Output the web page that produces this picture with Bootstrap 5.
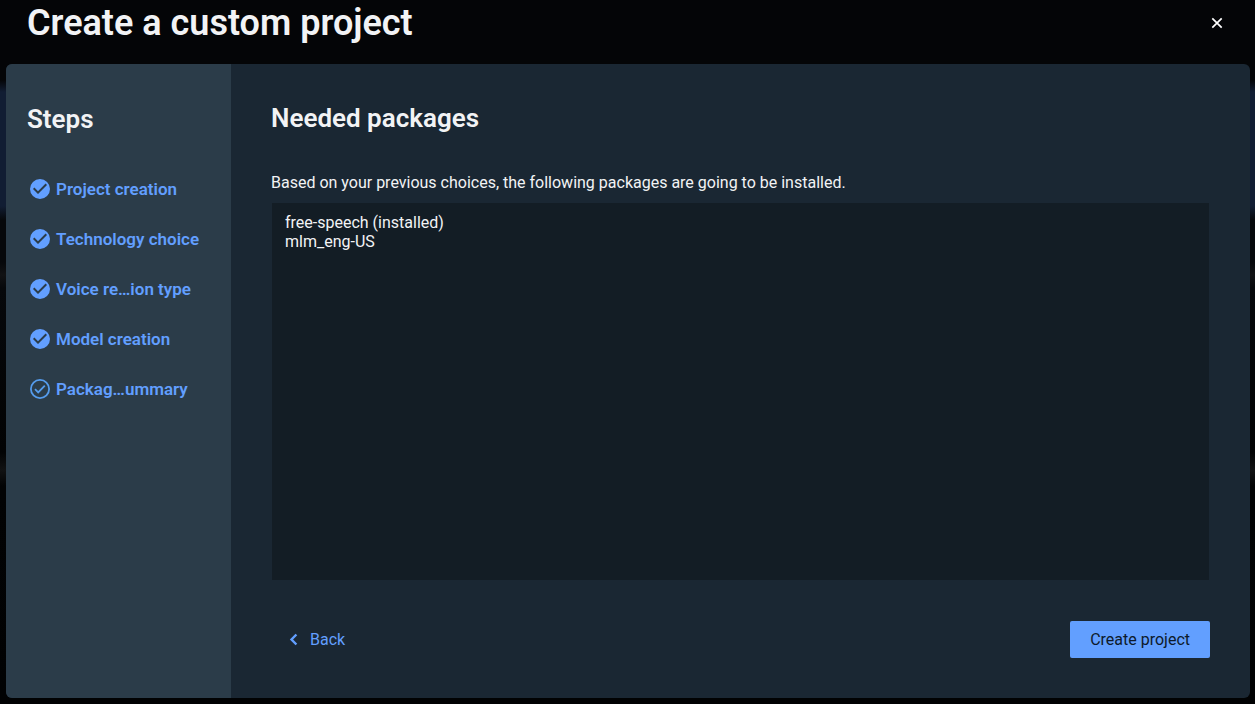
<!DOCTYPE html>
<html lang="en">
<head>
<meta charset="utf-8">
<meta name="viewport" content="width=device-width, initial-scale=1">
<title>Create a custom project</title>
<link href="https://cdn.jsdelivr.net/npm/bootstrap@5.3.0/dist/css/bootstrap.min.css" rel="stylesheet">
<style>
  :root { --accent: #629fff; --ink: #f2f3f5; --surface: #1a2733; }
  body {
    font-family: Roboto, "Liberation Sans", sans-serif;
    font-size: 16px;
    line-height: 19px;
    color: var(--ink);
    background: linear-gradient(#040507 0, #040507 80px, #111d33 92px, #111d33 206px, #06080b 220px, #06080b 262px, #111214 275px, #06080b 288px, #020304 452px, #111213 470px, #020304 486px, #010203 100%);
  }
  .dialog-head { padding: 0 28px 18px 27px; }
  .dialog-title { font-size: 36px; line-height: 46px; font-weight: 600; }
  .section-title { font-size: 26px; line-height: 32px; font-weight: 600; }
  .close-btn { color: #fff; }
  .wizard { margin: 0 5px 6px 6px; border-radius: 6px; background: var(--surface); }
  .steps { width: 225px; padding: 39px 21px; background: #2b3c49; }
  .step-list { gap: 26px; margin-top: 42px; padding-left: 1px; }
  .step { height: 24px; gap: 4px; color: var(--accent); font-size: 17px; font-weight: 600; }
  .pane { padding: 38px 40px 40px; }
  .pane-label { margin-top: 39px; padding-bottom: 10px; }
  .packages {
    padding: 10px 13px;
    border: 1px solid var(--surface);
    border-radius: 0;
    resize: none;
    color: var(--ink);
    background: #131d25;
    outline: 0;
  }
  .wizard .btn { --bs-btn-font-size: 16px; --bs-btn-line-height: 19px; --bs-btn-border-radius: 2px; --bs-btn-padding-y: 8px; }
  .back-btn { --bs-btn-color: var(--accent); --bs-btn-hover-color: #8bb8ff; --bs-btn-padding-x: 16px; }
  .create-btn {
    --bs-btn-color: #0d1a2b; --bs-btn-bg: var(--accent);
    --bs-btn-hover-color: #0d1a2b; --bs-btn-hover-bg: #7badff;
    --bs-btn-padding-x: 19px;
  }
</style>
</head>
<body class="vh-100 d-flex flex-column">
<svg class="d-none" aria-hidden="true">
  <symbol id="done" viewBox="0 0 24 24"><path fill="currentColor" d="M12 2a10 10 0 1 0 0 20 10 10 0 0 0 0-20zm-2 15-5-5 1.400-1.400 3.600 3.600 7.600-7.600L19 8z"/></symbol>
  <symbol id="current" viewBox="0 0 24 24" fill="none" stroke="#559ced"><circle cx="12" cy="12" r="9.100" stroke-width="1.800"/><path d="M7 12.200l3.200 3.200 6.600-6.800" stroke-width="1.800"/></symbol>
</svg>
<header class="dialog-head d-flex align-items-center justify-content-between">
  <h1 class="dialog-title mb-0">Create a custom project</h1>
  <button type="button" class="close-btn btn p-0 border-0 d-flex" aria-label="Close">
    <svg width="20" height="20" viewBox="0 0 20 20" fill="none" stroke="currentColor" stroke-width="1.700"><path d="M5.300 5.300l9.400 9.400M14.700 5.300l-9.400 9.400"/></svg>
  </button>
</header>
<main class="wizard d-flex flex-grow-1 overflow-hidden">
  <nav class="steps flex-shrink-0" aria-label="Steps">
    <h2 class="section-title mb-0">Steps</h2>
    <ol class="step-list list-unstyled d-flex flex-column mb-0">
      <li><a href="#" class="step d-flex align-items-center text-decoration-none"><svg width="24" height="24"><use href="#done"/></svg>Project creation</a></li>
      <li><a href="#" class="step d-flex align-items-center text-decoration-none"><svg width="24" height="24"><use href="#done"/></svg>Technology choice</a></li>
      <li><a href="#" class="step d-flex align-items-center text-decoration-none"><svg width="24" height="24"><use href="#done"/></svg>Voice re…ion type</a></li>
      <li><a href="#" class="step d-flex align-items-center text-decoration-none"><svg width="24" height="24"><use href="#done"/></svg>Model creation</a></li>
      <li><a href="#" class="step d-flex align-items-center text-decoration-none" aria-current="step"><svg width="24" height="24"><use href="#current"/></svg>Packag…ummary</a></li>
    </ol>
  </nav>
  <section class="pane d-flex flex-column flex-grow-1">
    <h2 class="section-title mb-0">Needed packages</h2>
    <label class="pane-label" for="packages">Based on your previous choices, the following packages are going to be installed.</label>
    <textarea id="packages" class="packages flex-grow-1 w-100" readonly>free-speech (installed)
mlm_eng-US</textarea>
    <div class="d-flex justify-content-between pt-4 mt-3">
      <button type="button" class="back-btn btn border-0 d-flex align-items-center gap-2">
        <svg width="15" height="14" viewBox="0 0 15 14" fill="none" stroke="currentColor" stroke-width="2.400"><path d="M9.400 1.500L4.500 6.500l4.900 5"/></svg>Back</button>
      <button type="button" class="create-btn btn">Create project</button>
    </div>
  </section>
</main>
<script src="https://cdn.jsdelivr.net/npm/bootstrap@5.3.0/dist/js/bootstrap.bundle.min.js"></script>
</body>
</html>
